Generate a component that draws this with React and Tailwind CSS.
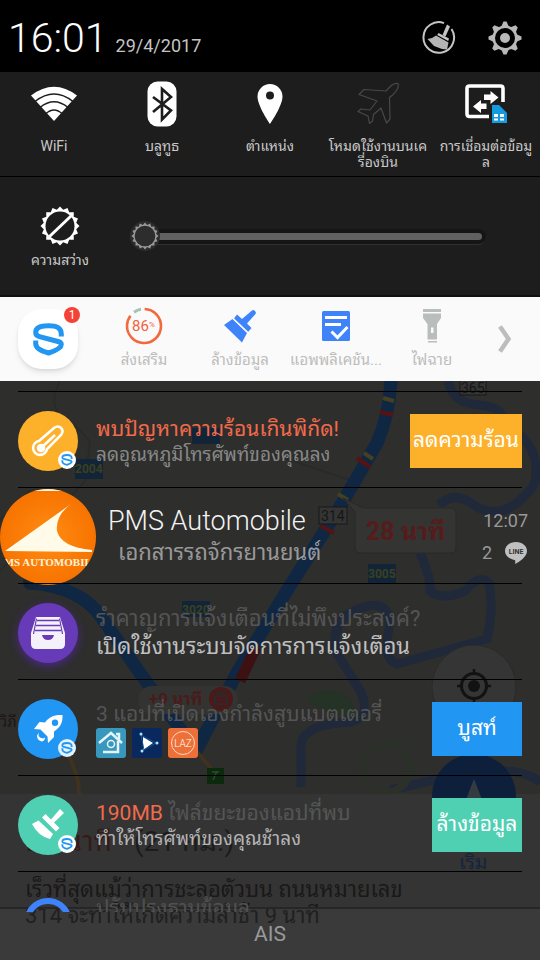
import React from "react";

const FONT = "font-['Roboto','Droid_Sans_Thai','Noto_Sans_Thai_Looped','Loma','Umpush','Noto_Sans_Thai','Noto_Sans',sans-serif]";

function sunPoints(n, outer, inner) {
  return Array.from({ length: n * 2 }, (_, i) => {
    const a = (i * Math.PI) / n - Math.PI / 2;
    const r = i % 2 ? inner : outer;
    return `${(20 + r * Math.cos(a)).toFixed(1)},${(20 + r * Math.sin(a)).toFixed(1)}`;
  }).join(" ");
}

function SLogo({ className, color = "#2196f3" }) {
  return (
    <svg viewBox="0 0 31 33" className={className} fill="none" stroke={color} strokeWidth="5" aria-hidden="true">
      <path d="M28.300 13.500V11C28.300 5 24 2.800 15.500 2.800S2.700 5 2.700 9.500c0 2.500 1.300 3.500 3.800 4.200L25 18.500c2.500.6 3.300 1.500 3.300 3 0 3.500-5 6-12.800 8.500C8 28 2.700 25.500 2.700 20.500V17.500" />
    </svg>
  );
}

function SBadge({ inverse }) {
  return (
    <span
      className={`absolute right-0.5 bottom-0.5 flex h-[18px] w-[18px] items-center justify-center rounded-full ${inverse ? "bg-[#e3f2fd]" : "bg-white"}`}
    >
      <SLogo className="h-3 w-3" />
    </span>
  );
}

function BroomCircle() {
  return (
    <svg viewBox="0 0 34 34" className="h-[34px] w-[34px]" aria-hidden="true">
      <path d="M22 2.100A15.300 15.300 0 1 0 29.500 8" fill="none" stroke="#c4c4c4" strokeWidth="2" />
      <path d="M25 3.500l3 2-4.500 10-3-1.500z" fill="#c4c4c4" />
      <path d="M16.500 12l10.500 5.500-.8 2.500-11-6z" fill="#c4c4c4" />
      <path d="M14 14.500l12.500 7-1.500 7-5-.5-8-3-6.500-7c3.200-.3 6-1.500 8.500-3.500z" fill="#b4b4b4" />
    </svg>
  );
}

function Gear() {
  return (
    <svg viewBox="0 0 34 34" className="h-[34px] w-[34px]" aria-hidden="true">
      <g fill="#b8b8b8">
        {[0, 45, 90, 135, 180, 225, 270, 315].map((a) => (
          <path key={a} d="M15.500.5h3l2.500 5.500h-8z" transform={`rotate(${a} 17 17)`} />
        ))}
        <circle cx="17" cy="17" r="5" />
      </g>
      <circle cx="17" cy="17" r="11.300" fill="none" stroke="#b8b8b8" strokeWidth="2.600" />
    </svg>
  );
}

function WifiIcon() {
  return (
    <svg viewBox="0 0 46 36" className="h-9 w-[46px]" aria-hidden="true">
      <path d="M23 35L0 9.500Q23-8 46 9.500z" fill="#fff" />
      <g fill="none" stroke="#1d1d1d" strokeWidth="1.500">
        <path d="M4 15.500Q23 .5 42 15.500" />
        <path d="M9 21.500Q23 10 37 21.500" />
        <path d="M14.500 28Q23 20 31.500 28" />
      </g>
    </svg>
  );
}

function BluetoothIcon() {
  return (
    <svg viewBox="0 0 30 46" className="h-[46px] w-[30px]" aria-hidden="true">
      <rect x=".5" y=".5" width="29" height="45" rx="10" fill="#fff" />
      <path d="M6 16l18 13.500L15 38.500V8l9 8L6 31" fill="none" stroke="#1d1d1d" strokeWidth="2.600" />
    </svg>
  );
}

function PinIcon() {
  return (
    <svg viewBox="0 0 26 40" className="h-10 w-[26px]" aria-hidden="true">
      <path fillRule="evenodd" d="M13 0A12.500 12.500 0 0 0 .5 12.500C.5 22 13 40 13 40S25.500 22 25.500 12.500A12.500 12.500 0 0 0 13 0zm0 7.500a4 4 0 1 1 0 8 4 4 0 0 1 0-8z" fill="#fff" />
    </svg>
  );
}

function PlaneIcon() {
  return (
    <svg viewBox="0 0 44 44" className="h-11 w-11" fill="none" stroke="#484848" strokeWidth="1.200" strokeLinejoin="round" aria-hidden="true">
      <path d="M42 1.500c-4-1-7 2-12 7.500L8 7.500 3 12.500l18 6.500-7 9-9-1-3 2.500 10 4.500 1.500 7.500 3-2.500 1-6.500 7.500-6.500 5.500 15 3.500-4-.5-21.500C38 12 43.500 6 42 1.500z" />
    </svg>
  );
}

function DataIcon() {
  return (
    <svg viewBox="0 0 44 40" className="h-10 w-11" aria-hidden="true">
      <path d="M25 32.500H5.500q-2.500 0-2.500-2.500V4.500Q3 2 5.500 2h31Q39 2 39 4.500V18" fill="none" stroke="#fff" strokeWidth="3.600" />
      <path d="M20 10.500h6.500V7l8 6.500-8 6.500v-4H20zM22.500 19.500H17V16L9 22.500l8 6.500v-4h5.500z" fill="#fff" />
      <path d="M28 21h7l8 8v10H28z" fill="#149bdf" />
      <path d="M30 30h4v3h-4zM36 30h4v3h-4zM30 34.500h4v2h-4zM36 34.500h4v2h-4z" fill="#fff" />
    </svg>
  );
}

function BrightIcon() {
  return (
    <svg viewBox="0 0 40 40" className="h-10 w-10" aria-hidden="true">
      <polygon points={sunPoints(16, 19.500, 16.500)} fill="#fff" />
      <circle cx="20" cy="20" r="14.500" fill="#1d1d1d" />
      <path d="M9.500 30.500L31 10" stroke="#fff" strokeWidth="3" />
    </svg>
  );
}

function BoostRing() {
  return (
    <svg viewBox="0 0 38 38" className="h-[38px] w-[38px]" aria-hidden="true">
      <circle cx="19" cy="19" r="17" fill="none" stroke="#f4683f" strokeWidth="2.600" strokeDasharray="90 17" transform="rotate(-88 19 19)" />
      <path d="M9 5.200q4-2.700 7-3" stroke="#a5c4b5" strokeWidth="3" fill="none" />
      <text x="7" y="24" fontSize="15" fill="#f4623a">86</text>
      <text x="24" y="20" fontSize="8" fill="#f4623a">%</text>
    </svg>
  );
}

function BrushIcon() {
  return (
    <svg viewBox="0 0 34 34" className="h-[34px] w-[34px]" fill="#3f83fb" aria-hidden="true">
      <path d="M29 1.500q1.500-1 3 .5t.5 3L24 14.500l4.500 4.500-3.500 4L11 9.500l3-4 5 4.500z" />
      <path d="M9.500 10L24 24l-5 9.500L1 16z" />
      <path d="M9.500 9L25.500 24" stroke="#fafafa" strokeWidth="1.200" />
    </svg>
  );
}

function AppsIcon() {
  return (
    <svg viewBox="0 0 28 30" className="h-[30px] w-7" aria-hidden="true">
      <rect width="28" height="30" rx="1.500" fill="#3f83fb" />
      <path d="M3 6.500h22M3 13.500h16" stroke="#fff" strokeWidth="3" />
      <path d="M9.500 20.500l6 6L25.500 16" fill="none" stroke="#fff" strokeWidth="3" />
    </svg>
  );
}

function TorchIcon() {
  return (
    <svg viewBox="0 0 20 36" className="h-9 w-5" fill="#b9bdbc" aria-hidden="true">
      <path d="M1 1h18v3H1zM6 33h9v1.500H6z" />
      <path fillRule="evenodd" d="M1 5.500h18V10l-4 6v15.500H5.500V16L1 10zM9 19.500V25h2.500v-5.500z" />
    </svg>
  );
}

function MapBackdrop() {
  return (
    <svg viewBox="0 381 540 579" preserveAspectRatio="xMidYMin slice" className="absolute inset-0 h-full w-full" aria-hidden="true">
      <rect y="381" width="540" height="579" fill="#2e2e2d" />
      <g fill="none" stroke="#292928" strokeWidth="1.500">
        <path d="M60 381q-15 30 10 40l20 20-5 40-85 90M260 450l90 30M0 520l30-30" />
      </g>
      <g fill="none" stroke="#20293a" strokeWidth="9">
        <path d="M448 381q5 22 30 24 25 2 25 15M520 435q22 20 14 50-30 40-60 20-20-15-35 0M420 553q12 28 10 38 12 10 35 0 15-18 24-8 5 25-2 56l-90 25q-15-5-8-35 2-30-25-22-35 10-28 45l25 40q10 25-10 30-50 2-50 25v40M390 790l80-18q50-6 70 10" />
      </g>
      <path d="M305 700q25-20 45 0l10 18-30-5z" fill="#253226" />
      <g fill="none" stroke="#102743" strokeLinejoin="round">
        <path d="M391 381q-2 35-14 62l-36 62L288 589l-50 82-42 80-56-78-38-55q-20-30-70-35" strokeWidth="13" />
      </g>
      <path d="M380 412l13 3M357 458l13 9M321 526l13 7" stroke="#561312" strokeWidth="4" />
      <path d="M256 647l-16 34" stroke="#3d1112" strokeWidth="11" />
      <path d="M383 398l11 3M364 453l9 6M338 494l10 6" stroke="#45401f" strokeWidth="4" />
      <path d="M65 750q15 25 14 45M197 752l14 16" stroke="#3f321f" strokeWidth="4" fill="none" />
      <g fill="#122538">
        <rect x="75" y="459" width="28" height="20" />
        <rect x="192" y="428" width="28" height="16" />
        <rect x="182" y="601" width="28" height="16" />
        <rect x="368" y="564" width="28" height="19" />
        <circle cx="31" cy="582" r="8" />
      </g>
      <g fontSize="12" fontWeight="700" fill="#3c4020">
        <text x="75" y="473">2004</text>
        <text x="182" y="614">3020</text>
        <text x="368" y="578">3005</text>
      </g>
      <g fontSize="14" fill="#161616">
        <rect x="460" y="375" width="26" height="20" fill="#343434" stroke="#181818" />
        <text x="461" y="393">365</text>
        <rect x="319" y="507" width="28" height="17" fill="#343434" stroke="#181818" />
        <text x="321" y="521">314</text>
      </g>
      <path d="M343 498l12 14v35q0 6 6 6h89q6 0 6-6v-33q0-6-6-6h-87z" fill="#343433" stroke="#282828" />
      <text x="366" y="540" fontSize="25" fontWeight="700" fill="#561b1b">28 นาที</text>
      <rect x="138" y="686" width="100" height="28" rx="14" fill="#333332" />
      <text x="149" y="705" fontSize="17" fontWeight="700" fill="#491b1b">+9 นาที</text>
      <circle cx="221" cy="699" r="12" fill="#4b1919" />
      <path d="M215 696h12v8h-12zM216 694l10-3" stroke="#2a2a2a" fill="none" strokeWidth="2" />
      <text x="0" y="727" fontSize="15" fill="#1b1714">วิภี</text>
      <circle cx="474" cy="687" r="42" fill="#353535" stroke="#2a2a2a" />
      <circle cx="474" cy="686" r="12.500" fill="none" stroke="#121212" strokeWidth="3" />
      <circle cx="474" cy="686" r="6" fill="#121212" />
      <path d="M474 669v6M474 697v6M457 686h6M485 686h6" stroke="#121212" strokeWidth="2.500" />
      <circle cx="386" cy="768" r="24" fill="none" stroke="#2b3029" strokeWidth="8" />
      <rect x="207" y="768" width="17" height="16" fill="#0b290d" />
      <path d="M213 780l4-9M212 772h7" stroke="#2f4930" strokeWidth="1.500" />
      <rect y="794" width="540" height="166" fill="#343434" />
      <circle cx="474" cy="796" r="42" fill="#0e1f3b" />
      <path d="M474 779l18 46h-36z" fill="#343c42" />
      <text x="459" y="869" fontSize="20" fill="#15253d">เริ่ม</text>
      <text x="26" y="851" fontSize="28" fill="#351a19">28 นาที</text>
      <text x="134" y="851" fontSize="28" fill="#1c1c1c">(21 กม.)</text>
      <g fontSize="22" fill="#191919">
        <text x="25" y="897">เร็วที่สุดแม้ว่าการชะลอตัวบน ถนนหมายเลข</text>
        <text x="25" y="923">314 จะทำให้เกิดความล่าช้า 9 นาที</text>
      </g>
    </svg>
  );
}

const toggles = [
  { Icon: WifiIcon, label: "WiFi" },
  { Icon: BluetoothIcon, label: "บลูทูธ" },
  { Icon: PinIcon, label: "ตำแหน่ง" },
  { Icon: PlaneIcon, label: <>โหมดใช้งานบนเค<br />รื่องบิน</> },
  { Icon: DataIcon, label: <>การเชื่อมต่อข้อมู<br />ล</> },
];

const tools = [
  { Icon: BoostRing, label: "ส่งเสริม" },
  { Icon: BrushIcon, label: "ล้างข้อมูล" },
  { Icon: AppsIcon, label: "แอพพลิเคชัน..." },
  { Icon: TorchIcon, label: "ไฟฉาย" },
];

function Row({ children }) {
  return (
    <li className="mx-[18px] h-24 shrink-0 border-t border-black pt-[3px]">
      <div className="flex h-full items-center">{children}</div>
    </li>
  );
}

function Round({ className, children }) {
  return <div className={`relative mr-[18px] flex h-[60px] w-[60px] shrink-0 items-center justify-center rounded-full ${className}`}>{children}</div>;
}

function Action({ className, children }) {
  return <button className={`h-[54px] shrink-0 whitespace-nowrap text-center text-[21px] text-white ${className}`}>{children}</button>;
}

export default function App() {
  return (
    <main className={`flex h-screen flex-col overflow-hidden bg-black text-white ${FONT}`}>
      <header className="flex h-[72px] shrink-0 items-center pl-2 pr-[18px]">
        <time className="mt-1 text-[41px] font-light leading-[48px]">16:01</time>
        <time className="ml-2 mt-5 text-[18px] leading-6 text-[#c4c4c4]">29/4/2017</time>
        <div className="ml-auto mt-1 flex gap-8">
          <button aria-label="Clear"><BroomCircle /></button>
          <button aria-label="Settings"><Gear /></button>
        </div>
      </header>

      <section className="grid h-[104px] shrink-0 grid-cols-5 bg-[#1d1d1d]">
        {toggles.map(({ Icon, label }, i) => (
          <button key={i} className="flex flex-col items-center pt-2">
            <span className="flex h-12 items-center"><Icon /></span>
            <span className="mt-2.5 whitespace-nowrap text-[14px] leading-4 text-[#c8c8c8]">{label}</span>
          </button>
        ))}
      </section>

      <section className="flex h-[121px] shrink-0 items-center border-b-2 border-t border-b-[#101010] border-t-black bg-[#1d1d1d] pl-3">
        <button className="mt-1 flex w-24 flex-col items-center gap-1">
          <BrightIcon />
          <span className="text-[14px] leading-5 text-[#c8c8c8]">ความสว่าง</span>
        </button>
        <div className="relative ml-[22px] mr-[54px] flex h-8 flex-1 items-center">
          <span className="absolute inset-x-0 top-[9px] h-4 rounded-full border-b border-[#303030] bg-[#151515]" />
          <input
            type="range"
            aria-label="ความสว่าง"
            defaultValue="0"
            className="relative mr-1 h-[7px] flex-1 appearance-none rounded-full bg-[#606060] [&::-webkit-slider-thumb]:h-[30px] [&::-webkit-slider-thumb]:w-[30px] [&::-webkit-slider-thumb]:appearance-none [&::-webkit-slider-thumb]:rounded-full [&::-webkit-slider-thumb]:bg-[#2d2d2d]"
          />
          <svg viewBox="0 0 40 40" className="pointer-events-none absolute left-0 top-px h-[30px] w-[30px]" aria-hidden="true">
            <polygon points={sunPoints(16, 18, 15)} fill="#9a9a9a" />
            <circle cx="20" cy="20" r="13.800" fill="#2d2d2d" />
          </svg>
        </div>
      </section>

      <section className="flex h-[84px] shrink-0 items-center bg-[#fafafa] pl-[18px]">
        <button aria-label="Security" className="relative flex h-[60px] w-[60px] shrink-0 items-center justify-center rounded-[24px] bg-white shadow-md">
          <SLogo className="h-[33px] w-[31px]" />
          <span className="absolute -right-0.5 -top-0.5 flex h-4 w-4 items-center justify-center rounded-full bg-[#f44336] text-[12px] leading-4 text-white">1</span>
        </button>
        <div className="ml-[18px] grid flex-1 grid-cols-4">
          {tools.map(({ Icon, label }, i) => (
            <button key={i} className="flex flex-col items-center">
              <span className="flex h-9 items-center"><Icon /></span>
              <span className="mt-1.5 whitespace-nowrap text-[15px] leading-5 text-[#bdbdbd]">{label}</span>
            </button>
          ))}
        </div>
        <button aria-label="Next" className="ml-[18px] mr-7">
          <svg viewBox="0 0 14 28" className="h-7 w-3.5" fill="none" stroke="#bdbdbd" strokeWidth="4.500" aria-hidden="true">
            <path d="M2 1.500L10.500 14 2 26.500" />
          </svg>
        </button>
      </section>

      <div className="relative flex min-h-0 flex-1 flex-col">
        <MapBackdrop />
        <ul className="relative z-10 -mb-[5px] flex min-h-0 flex-1 flex-col overflow-hidden pt-2.5">
          <Row>
            <Round className="bg-[#fdb12b]">
              <svg viewBox="0 0 34 34" className="h-[34px] w-[34px]" fill="none" stroke="#fff" strokeWidth="2.600" aria-hidden="true">
                <path d="M8 17L23 4q4-3 7 0t0 7L16 25a7 7 0 1 1-8-8z" />
                <path d="M10 24l14-13" strokeWidth="2.500" />
                <circle cx="10" cy="24" r="3" fill="#fff" />
              </svg>
              <SBadge />
            </Round>
            <div className="min-w-0 flex-1 whitespace-nowrap">
              <h2 className="text-[21px] leading-7 text-[#f26a4b]">พบปัญหาความร้อนเกินพิกัด!</h2>
              <p className="text-[19px] leading-6 text-[#888]">ลดอุณหภูมิโทรศัพท์ของคุณลง</p>
            </div>
            <Action className="w-28 bg-[#fdb12b]">ลดความร้อน</Action>
          </Row>

          <Row>
            <svg viewBox="0 0 96 96" className="-ml-[18px] mr-3 h-24 w-24 shrink-0" aria-label="PMS Automobile" role="img">
              <defs>
                <clipPath id="avatar"><circle cx="48" cy="48" r="48" /></clipPath>
                <radialGradient id="glow"><stop offset="0" stopColor="#ff8c14" /><stop offset="1" stopColor="#f77300" /></radialGradient>
              </defs>
              <g clipPath="url(#avatar)">
                <rect width="96" height="96" fill="url(#glow)" />
                <path d="M30 0h36v2H30z" fill="#fff3d8" />
                <path d="M5 62L71 15q-16 12-14 27 4 16 35 19v2z" fill="#fffbe8" />
                <text x="48" y="77" textAnchor="middle" fontSize="11" fontWeight="700" fill="#fff3d8" className="font-['Liberation_Serif',serif]">PMS AUTOMOBILE</text>
              </g>
            </svg>
            <div className="min-w-0 flex-1 whitespace-nowrap">
              <h2 className="text-[27px] font-light leading-8 text-[#f2f2f2]">PMS Automobile</h2>
              <p className="pl-2.5 text-[22px] leading-8 text-[#999]">เอกสารรถจักรยานยนต์</p>
            </div>
            <div className="-mr-1.5 flex flex-col items-end text-[18px] leading-8 text-[#999]">
              <time>12:07</time>
              <div className="flex items-center gap-3">
                <span>2</span>
                <svg viewBox="0 0 24 24" className="h-6 w-6" aria-label="LINE" role="img">
                  <path d="M12 1C5.500 1 1 5 1 10c0 4.500 4 8 9.500 9 1 .3 1 1.500.5 4 5-2.500 12-7.500 12-13C23 5 18.500 1 12 1z" fill="#c0c0c0" />
                  <text x="12" y="13" textAnchor="middle" fontSize="7" fontWeight="700" fill="#333">LINE</text>
                </svg>
              </div>
            </div>
          </Row>

          <Row>
            <Round className="bg-[#673ab7] shadow-[0_3px_8px_#4a2a86]">
              <svg viewBox="0 0 36 34" className="h-[34px] w-9" aria-hidden="true">
                <path d="M6 1h24l5 16v11q0 5-5 5H6q-5 0-5-5V17z" fill="#f5f1fb" />
                <path d="M7 4.500h22M6 9.500h24M5 14.500h26" stroke="#673ab7" strokeWidth="1.500" />
                <path d="M6.500 2.500L3.500 18M29.500 2.500l3 15.500" stroke="#673ab7" strokeWidth="1.200" />
                <path d="M12 19h12q-1 5-6 5t-6-5z" fill="#673ab7" />
              </svg>
            </Round>
            <div className="min-w-0 flex-1 whitespace-nowrap text-[22px]">
              <h2 className="leading-7 text-[#555]">รำคาญการแจ้งเตือนที่ไม่พึงประสงค์?</h2>
              <p className="leading-7 text-[#c0c0c0]">เปิดใช้งานระบบจัดการการแจ้งเตือน</p>
            </div>
          </Row>

          <Row>
            <Round className="bg-[#2196f3]">
              <svg viewBox="0 0 30 30" className="h-[30px] w-[30px]" fill="#fff" aria-hidden="true">
                <path fillRule="evenodd" d="M29.500 1C21 .5 16 3 12 8.500L6.500 8 1 15l6.500.5 7 7 .5 6.500 6-6V17.500c6-4 9-8.500 8.500-16.500zM22 5.500a3.200 3.200 0 1 1 0 6.400 3.200 3.200 0 0 1 0-6.400z" />
                <path d="M6 18.500q-2 5 4 6l2-1q0 3-3 4-5-1-5-6z" />
              </svg>
              <SBadge inverse />
            </Round>
            <div className="min-w-0 flex-1 whitespace-nowrap">
              <h2 className="text-[21px] leading-7 text-[#555]">3 แอปที่เปิดเองกำลังสูบแบตเตอรี่</h2>
              <div className="flex gap-1.5">
                <svg viewBox="0 0 30 30" className="h-[30px] w-[30px]" aria-hidden="true">
                  <rect width="30" height="30" rx="3" fill="#3797bd" />
                  <path d="M3 15L15 5l11 10M7 24h15V13M20 6h3v5" fill="none" stroke="#e4f4f8" strokeWidth="2.500" />
                  <circle cx="15" cy="16" r="3.500" fill="none" stroke="#e4f4f8" strokeWidth="1.500" />
                </svg>
                <svg viewBox="0 0 30 30" className="h-[30px] w-[30px]" aria-hidden="true">
                  <rect width="30" height="30" rx="3" fill="#08285e" />
                  <path d="M11 9l10 6-10 7z" fill="#fff" />
                  <path d="M9 7l3 15 12-7z" fill="none" stroke="#12559a" />
                  <g fill="#a8e4ff"><circle cx="9" cy="6" r="1.500" /><circle cx="10" cy="23" r="1.500" /><circle cx="25" cy="15" r="1.500" /></g>
                </svg>
                <svg viewBox="0 0 30 30" className="h-[30px] w-[30px]" aria-hidden="true">
                  <rect width="30" height="30" rx="3" fill="#ed7039" />
                  <circle cx="15" cy="15" r="11.500" fill="none" stroke="#ffd9c4" />
                  <text x="15" y="19" textAnchor="middle" fontSize="10" fontWeight="300" fill="#fff">LAZ</text>
                </svg>
              </div>
            </div>
            <Action className="w-[90px] bg-[#2196f3]">บูสท์</Action>
          </Row>

          <Row>
            <Round className="bg-[#4fd0b3]">
              <svg viewBox="0 0 34 34" className="h-[34px] w-[34px]" fill="#fff" aria-hidden="true">
                <path d="M29 1l4 4L23 14.500l5.500 5.500-3.500 3.500L11 9.500 14.500 6l5.500 5.500z" />
                <path d="M7.500 12.500L22 26l-3 5Q7 28 1 16z" />
              </svg>
              <SBadge />
            </Round>
            <div className="min-w-0 flex-1 whitespace-nowrap">
              <h2 className="text-[21px] leading-7 text-[#555]"><span className="text-[#f26a4b]">190MB</span> ไฟล์ขยะของแอปที่พบ</h2>
              <p className="text-[19px] leading-6 text-[#b4b4b4]">ทำให้โทรศัพท์ของคุณช้าลง</p>
            </div>
            <Action className="w-[90px] bg-[#4fd0b3]">ล้างข้อมูล</Action>
          </Row>

          <li className="mx-[18px] flex h-24 shrink-0 border-t border-black pt-[22px]">
            <svg viewBox="0 0 60 60" className="mr-[18px] h-[60px] w-[60px]" fill="none" stroke="#3f83fb" strokeWidth="6" aria-hidden="true">
              <path d="M10 22C16 2 44 2 50 22" />
            </svg>
            <h2 className="text-[21px] leading-7 text-[#505050]">ปรับปรุงฐานข้อมูล</h2>
          </li>
        </ul>
        <footer className="relative h-[53px] shrink-0 border-t-2 border-[#262626] bg-white/[0.03] text-center text-[21px] leading-[50px] text-[#999]">AIS</footer>
      </div>
    </main>
  );
}
